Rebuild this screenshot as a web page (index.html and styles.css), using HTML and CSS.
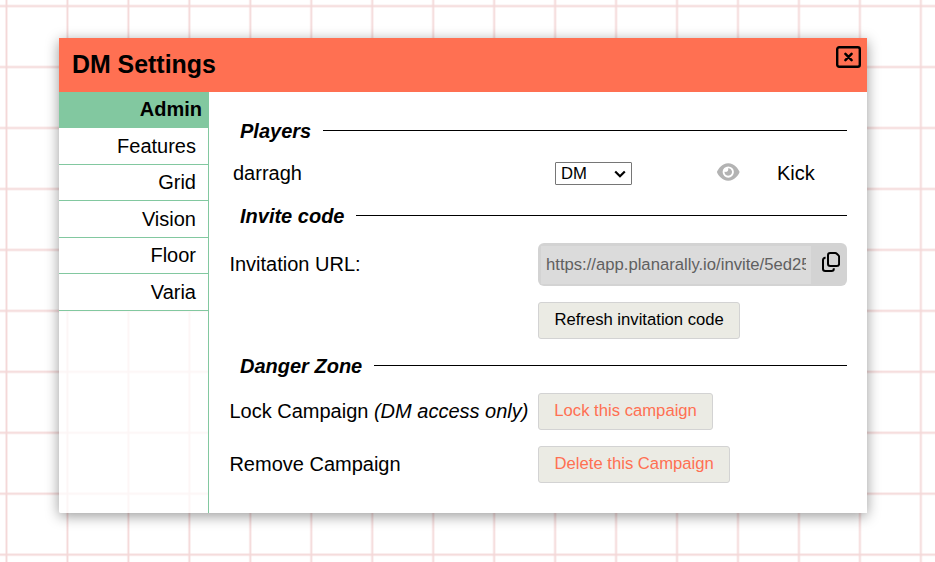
FILE: index.html
```html
<!DOCTYPE html>
<html lang="en">
<head>
<meta charset="utf-8">
<title>DM Settings</title>
<link rel="stylesheet" href="styles.css">
</head>
<body>
<svg class="board" aria-hidden="true">
  <defs>
    <pattern id="cells" width="60.96" height="60.96" x="-24" y="-24.4" patternUnits="userSpaceOnUse">
      <path d="M30.48 0V60.96M0 30.48H60.96" stroke="#c83c3c" stroke-opacity=".2" stroke-width="1.9"/>
    </pattern>
  </defs>
  <rect width="100%" height="100%" fill="url(#cells)"/>
</svg>
<div class="modal">
  <header class="header">
    <h1 class="title">DM Settings</h1>
    <svg class="close" viewBox="0 0 25 22"><rect x="1.2" y="1.2" width="22.6" height="19.6" rx="2" fill="none" stroke="#000" stroke-width="2.4"/><path d="M9.4 7.9l6.2 6.2M15.6 7.9l-6.2 6.2" stroke="#000" stroke-width="2.5" stroke-linecap="round"/></svg>
  </header>
  <div class="body">
    <nav class="menu">
      <div class="item selected">Admin</div>
      <div class="item">Features</div>
      <div class="item even">Grid</div>
      <div class="item">Vision</div>
      <div class="item even">Floor</div>
      <div class="item">Varia</div>
    </nav>
    <main class="panel">
      <h2 class="section">Players</h2>
      <div class="row player">
        <div class="name">darragh</div>
        <div class="role">
          <select class="select"><option>DM</option><option>Player</option></select>
          <svg class="chevron" viewBox="0 0 12 8"><path d="M1.2 1.5L6 6.2l4.8-4.7" fill="none" stroke="#000" stroke-width="2.2"/></svg>
        </div>
        <svg class="eye" viewBox="0 0 576 512"><path fill="#b3b3b3" d="M288 32c-80.8 0-145.5 36.8-192.6 80.6C48.6 156 17.3 208 2.5 243.7c-3.3 7.9-3.3 16.7 0 24.6C17.3 304 48.6 356 95.4 399.4C142.5 443.2 207.2 480 288 480s145.5-36.8 192.6-80.6c46.8-43.5 78.1-95.4 93-131.1c3.3-7.9 3.3-16.7 0-24.6c-14.9-35.7-46.2-87.7-93-131.1C433.5 68.8 368.8 32 288 32zM144 256a144 144 0 1 1 288 0 144 144 0 1 1 -288 0zm144-64c0 35.3-28.7 64-64 64c-7.1 0-13.9-1.2-20.3-3.3c-5.5-1.8-11.9 1.6-11.7 7.4c.3 6.9 1.3 13.8 3.2 20.7c13.7 51.2 66.4 81.6 117.6 67.9s81.6-66.4 67.9-117.6c-11.1-41.5-47.8-69.4-88.6-71.1c-5.8-.2-9.2 6.1-7.4 11.7c2.1 6.4 3.3 13.2 3.3 20.3z"/></svg>
        <div class="kick">Kick</div>
      </div>
      <h2 class="section invite">Invite code</h2>
      <div class="row">
        <div class="label">Invitation URL:</div>
        <div class="copybox">
          <div class="url"><div class="url-text">https://app.planarally.io/invite/5ed25</div></div>
          <svg class="copy" viewBox="0 0 18 20"><path d="M8.2 1H13.2Q14.1 1 14.8 1.7L16.5 3.4Q17.1 4 17.1 4.9V11.8a2.2 2.2 0 0 1-2.2 2.2H8.2A2.2 2.2 0 0 1 6 11.8V3.2A2.2 2.2 0 0 1 8.2 1zM3.6 5.8H3.2A2.2 2.2 0 0 0 1 8V16.8A2.2 2.2 0 0 0 3.2 19H9.6a2.2 2.2 0 0 0 2.2-2.2V16.2" fill="none" stroke="#000" stroke-width="2" stroke-linejoin="round"/></svg>
        </div>
      </div>
      <div class="row next">
        <div></div>
        <button class="button refresh">Refresh invitation code</button>
      </div>
      <h2 class="section">Danger Zone</h2>
      <div class="row">
        <div class="label">Lock Campaign <em>(DM access only)</em></div>
        <button class="button danger">Lock this campaign</button>
      </div>
      <div class="row next">
        <div class="label">Remove Campaign</div>
        <button class="button danger delete">Delete this Campaign</button>
      </div>
    </main>
  </div>
</div>
</body>
</html>
```
FILE: styles.css
```css
* { box-sizing: border-box; }
body {
  margin: 0;
  height: 562px;
  overflow: hidden;
  background: #fff;
  font: 20px/24px "Liberation Sans", Arial, sans-serif;
  color: #000;
}
.board { position: absolute; inset: 0; width: 100%; height: 100%; }
.modal {
  position: relative;
  display: flex;
  flex-direction: column;
  width: 808px;
  height: 475px;
  margin: 38px 0 0 59px;
  background: rgba(255, 255, 255, .75);
  border-radius: 2px;
  box-shadow: 0 3px 14px rgba(0, 0, 0, .4);
}
.header {
  display: flex;
  justify-content: space-between;
  align-items: flex-start;
  height: 54px;
  padding: 8px 6px 0 13px;
  background: #ff7052;
}
.title { margin: 3px 0 0; font-size: 24.9px; line-height: 30px; }
.close { width: 25px; height: 22px; margin-top: .4px; }
.body { display: flex; flex: 1; }
.menu { width: 150px; border-right: 1px solid #82c8a0; }
.item {
  height: 36.5px;
  padding-right: 12px;
  border-bottom: 1px solid #82c8a0;
  background: #fff;
  line-height: 36px;
  text-align: right;
}
.even { line-height: 34.5px; }
.selected {
  width: 150px;
  height: 36px;
  padding-right: 7px;
  background: #82c8a0;
  font-weight: bold;
  line-height: 35px;
}
.panel { flex: 1; padding: 27px 20px 0 21px; background: #fff; }
.section {
  display: flex;
  align-items: center;
  gap: 12px;
  height: 24px;
  margin: 15px 0;
  padding-left: 10px;
  font-size: 20px;
  font-style: italic;
}
.section::after { content: ""; flex: 1; height: 1px; margin-bottom: 1px; background: #000; }
.section:first-child { margin: 0 0 12px; }
.invite { margin-top: 13px; }
.row {
  display: grid;
  grid-template-columns: 308px 309px;
  align-items: center;
  justify-items: start;
}
.next { margin-top: 16px; }
.label { margin: -2px 0 0 -.6px; white-space: nowrap; }
.player { grid-template-columns: 325px 162px 60px 1fr; height: 36px; }
.name { padding-left: 3px; }
.role { position: relative; display: flex; }
.select {
  appearance: none;
  width: 77px;
  height: 23px;
  padding: 0 5px;
  border: 1px solid #767676;
  border-radius: 1px;
  background: #fff;
  color: #000;
  font: 16.67px "Liberation Sans", Arial, sans-serif;
}
.chevron { position: absolute; right: 6px; top: 8px; width: 12px; height: 8px; }
.eye { width: 22.5px; height: 20px; margin-top: -2px; }
.copybox {
  display: flex;
  align-items: center;
  width: 309px;
  height: 43px;
  padding: 2px 6px 2px 3px;
  border-radius: 6px;
  background: #d3d3d3;
}
.url {
  width: 270px;
  height: 38px;
  padding: 0 5px;
  background: #dbdbdb;
  color: #606060;
  font-size: 16.67px;
  line-height: 37px;
}
.url-text { overflow: hidden; white-space: nowrap; }
.copy { width: 18px; height: 20px; margin: -5px 0 0 11px; }
.button {
  height: 37px;
  padding: 0 15px 1px 15.3px;
  border: 1px solid #d3d3d3;
  border-radius: 3px;
  background: #ebebe4;
  color: #000;
  font: 16.67px "Liberation Sans", Arial, sans-serif;
}
.refresh { width: 202px; }
.danger { color: #ff7052; }
.delete { width: 192px; }
```
